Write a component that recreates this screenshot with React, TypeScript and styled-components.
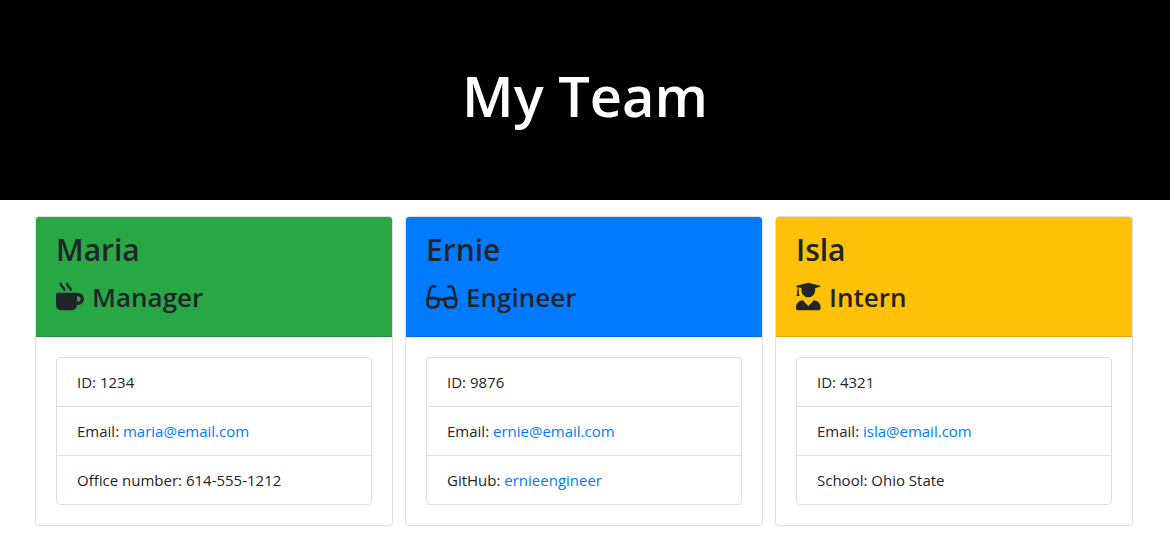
import React from "react";
import styled, { createGlobalStyle } from "styled-components";

const GlobalStyle = createGlobalStyle`
  *, *::before, *::after { box-sizing: border-box; }
  body {
    margin: 0;
    background: #fff;
    color: #212529;
    font-family: "Segoe UI", "Open Sans", "Noto Sans", sans-serif;
    font-size: 15px;
    line-height: 24px;
  }
`;

const Banner = styled.header`
  padding: 59px 32px 69px;
  background: #000;
  color: #fff;
  text-align: center;
`;

const Title = styled.h1`
  margin: 0;
  font-size: 56px;
  line-height: 72px;
  font-weight: 600;
`;

const Team = styled.main`
  display: grid;
  grid-template-columns: repeat(auto-fit, minmax(280px, 1fr));
  gap: 12px;
  padding: 16px 37px 32px 35px;
`;

const Card = styled.article`
  border: 1px solid #dfdfdf;
  border-radius: 4px;
  overflow: hidden;
`;

const CardHeader = styled.div<{ $color: string }>`
  padding: 12px 20px 19px;
  border-bottom: 1px solid rgba(0, 0, 0, 0.125);
  background: ${(p) => p.$color};
`;

const Name = styled.h2`
  margin: 0 0 6px;
  font-size: 30px;
  line-height: 42px;
  font-weight: 600;
`;

const Role = styled.h3`
  display: flex;
  align-items: center;
  gap: 8px;
  margin: 0;
  font-size: 26px;
  line-height: 40px;
  font-weight: 600;
`;

const Icon = styled.svg`
  flex: none;
  margin-bottom: 2px;
`;

const Details = styled.ul`
  margin: 20px;
  padding: 0;
  list-style: none;
  border: 1px solid #dfdfdf;
  border-radius: 4px;
`;

const Detail = styled.li`
  padding: 12px 20px;

  & + & {
    border-top: 1px solid #dfdfdf;
  }
`;

const Link = styled.a`
  color: #007bff;
  text-decoration: none;

  &:hover {
    text-decoration: underline;
  }
`;

const MugIcon = () => (
  <Icon width="28" height="29" viewBox="0 0 28 29" fill="currentColor" aria-hidden>
    <path
      fillRule="evenodd"
      d="M1.75 10.8H21.9a6.1 6.1 0 0 1 0 12.2H21A5.25 5.25 0 0 1 15.75 28.3H5.25A5.25 5.25 0 0 1 0 23.05v-10.5A1.75 1.75 0 0 1 1.75 10.8ZM21 14.3v5.25h.9a2.62 2.62 0 0 0 0-5.25Z"
    />
    <path
      fill="none"
      stroke="currentColor"
      strokeWidth="2.3"
      strokeLinecap="round"
      d="M4.6 1.6c.4 3.2 3.2 3.2 3.7 6.2M11 1.6c.4 3.2 3.2 3.2 3.7 6.2"
    />
  </Icon>
);

const GlassesIcon = () => (
  <Icon
    width="32"
    height="29"
    viewBox="0 0 32 29"
    fill="none"
    stroke="currentColor"
    strokeWidth="2.8"
    strokeLinecap="round"
    aria-hidden
  >
    <path strokeWidth="2.5" d="M1.5 17.5 4.1 6.9C4.7 4.4 6.3 3.8 9 4.7M30 17.5 27.4 6.9C26.8 4.4 25.2 3.8 22.5 4.7" />
    <path d="M1.5 17.1C4.8 15.7 9 15.7 12.7 17.1L12.3 21.6A4 4 0 0 1 8.3 25.4H5.5A4 4 0 0 1 1.5 21.4ZM30 17.1C26.7 15.7 22.5 15.7 18.8 17.1L19.2 21.6A4 4 0 0 0 23.2 25.4H26A4 4 0 0 0 30 21.4Z" />
    <path d="M12.7 17.4H18.8" />
  </Icon>
);

const GraduateIcon = () => (
  <Icon width="25" height="29" viewBox="0 0 25 29" fill="currentColor" aria-hidden>
    <path d="M.5 3.8 11.4.9a4 4 0 0 1 1.8 0L24.1 3.8c.6.2.6.8 0 1L19 6.2a7 7 0 1 1-13.4 0L2.6 5.3V8.6a1.2 1.2 0 0 1 .1 1.8L3.5 14H.5L1.4 10.4a1.2 1.2 0 0 1 .1-1.8V5L.5 4.8C0 4.6 0 4 .5 3.8Z" />
    <path d="M6.7 18.2 12.3 24.1 17.9 18.2c3.8.2 6.7 3.3 6.7 7v.5a2.6 2.6 0 0 1-2.6 2.6H2.6A2.6 2.6 0 0 1 0 25.7v-.5c0-3.7 2.9-6.8 6.7-7Z" />
  </Icon>
);

interface Member {
  name: string;
  role: string;
  color: string;
  icon: React.ReactNode;
  id: string;
  email: string;
  extra: React.ReactNode;
}

const members: Member[] = [
  {
    name: "Maria",
    role: "Manager",
    color: "#28a745",
    icon: <MugIcon />,
    id: "1234",
    email: "maria@email.com",
    extra: "Office number: 614-555-1212",
  },
  {
    name: "Ernie",
    role: "Engineer",
    color: "#007bff",
    icon: <GlassesIcon />,
    id: "9876",
    email: "ernie@email.com",
    extra: (
      <>
        GitHub: <Link href="https://github.com/ernieengineer">ernieengineer</Link>
      </>
    ),
  },
  {
    name: "Isla",
    role: "Intern",
    color: "#ffc107",
    icon: <GraduateIcon />,
    id: "4321",
    email: "isla@email.com",
    extra: "School: Ohio State",
  },
];

export default function App() {
  return (
    <>
      <GlobalStyle />
      <Banner>
        <Title>My Team</Title>
      </Banner>
      <Team>
        {members.map((m) => (
          <Card key={m.id}>
            <CardHeader $color={m.color}>
              <Name>{m.name}</Name>
              <Role>
                {m.icon}
                {m.role}
              </Role>
            </CardHeader>
            <Details>
              <Detail>ID: {m.id}</Detail>
              <Detail>
                Email: <Link href={`mailto:${m.email}`}>{m.email}</Link>
              </Detail>
              <Detail>{m.extra}</Detail>
            </Details>
          </Card>
        ))}
      </Team>
    </>
  );
}
